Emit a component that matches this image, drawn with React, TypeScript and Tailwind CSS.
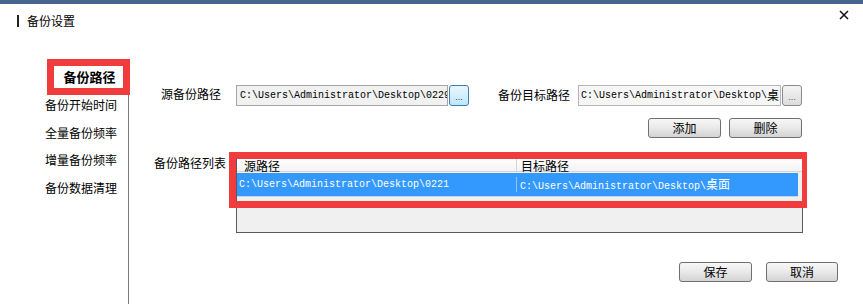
import React from "react";

const cjk = { fontFamily: '"Noto Sans CJK SC", "Liberation Sans", sans-serif' };
const mono = { fontFamily: '"Liberation Mono", "Noto Sans CJK SC", monospace' };

function WinButton({ label, className = "" }: { label: string; className?: string }) {
  return (
    <div
      className={
        "flex items-center justify-center rounded-[3px] border border-[#707070] bg-linear-to-b from-[#f7f7f7] via-[#e9e9e9] to-[#d3d3d3] text-[12px] text-black " +
        className
      }
      style={cjk}
    >
      {label}
    </div>
  );
}

function Dots({ focused }: { focused?: boolean }) {
  return (
    <div
      className={
        "ml-[1px] flex h-[21px] w-[20px] shrink-0 items-end justify-center rounded-[3px] border pb-[3px] text-[9px] leading-none " +
        (focused
          ? "border-[#3c7fb1] bg-linear-to-b from-[#eaf6fd] to-[#bee6fd] text-[#333]"
          : "border-[#8a8a8a] bg-linear-to-b from-[#f4f4f4] to-[#dcdcdc] text-[#555]")
      }
      style={{ fontFamily: '"Liberation Sans", sans-serif' }}
    >
      ...
    </div>
  );
}

export default function App() {
  const sideItems = ["备份开始时间", "全量备份频率", "增量备份频率", "备份数据清理"];
  return (
    <div className="relative flex h-[304px] w-[863px] flex-col overflow-hidden bg-white text-black" style={cjk}>
      <div className="h-[4px] bg-[#4a6491]" />
      {/* Title row */}
      <div className="flex h-[34px] items-center justify-between pl-[17px] pr-[14px]">
        <div className="flex items-center text-[12px]">
          <span className="mr-[8px] h-[12px] w-[2px] bg-[#222]" />
          <span>备份设置</span>
        </div>
        <svg width="10" height="10" viewBox="0 0 10 10" className="-mt-[12px]">
          <path d="M1 1 L9 9 M9 1 L1 9" stroke="#111" strokeWidth="1.5" />
        </svg>
      </div>

      {/* Body */}
      <div className="flex flex-1">
        {/* Sidebar */}
        <div className="flex w-[129px] flex-col pt-[21px]">
          <div className="ml-[47px] flex h-[36px] w-[83px] items-center justify-center border-[7px] border-[#f03c3c] bg-white pl-[2px] text-[13px] font-bold">
            备份路径
          </div>
          <div className="flex flex-1 flex-col gap-[9.6px] border-r border-[#7a7a7a] pl-[45px] pt-[1px]">
            {sideItems.map((t) => (
              <div key={t} className="flex h-[18px] items-center text-[12px]">
                {t}
              </div>
            ))}
          </div>
        </div>

        {/* Content */}
        <div className="flex flex-1 flex-col pt-[46px]">
          {/* Row 1 */}
          <div className="flex h-[22px] items-center">
            <div className="w-[107px] pl-[32px] text-[12px] -mt-[3px]">源备份路径</div>
            <div
              className="flex h-[21px] w-[212px] shrink-0 items-center overflow-hidden whitespace-nowrap border border-[#a5a5a5] bg-[#f1f1f1] pl-[3px] text-[10px]"
              style={mono}
            >
              C:\Users\Administrator\Desktop\0229
            </div>
            <Dots focused />
            <div className="ml-[29px] w-[80px] text-[12px]">备份目标路径</div>
            <div
              className="flex h-[21px] w-[203px] shrink-0 items-center overflow-hidden whitespace-nowrap border border-[#b5b5b5] bg-[#f6f6f6] pl-[2px] text-[10px]"
              style={mono}
            >
              C:\Users\Administrator\Desktop\<span className="text-[12px]" style={cjk}>桌</span>
            </div>
            <Dots />
          </div>

          {/* Row 2 */}
          <div className="mt-[12px] flex h-[20px] justify-end gap-[8px] pr-[61px]">
            <WinButton label="添加" className="h-[20px] w-[73px]" />
            <WinButton label="删除" className="h-[20px] w-[73px]" />
          </div>

          {/* Row 3 */}
          <div className="mt-[20px] flex">
            <div className="w-[107px] pl-[25px] text-[12px] leading-[14px] -mt-[2px]">备份路径列表</div>
            <div className="relative h-[75px] w-[567px] border border-[#5a5a5a] border-t-[#c8c8c8] bg-[#f0f0f0]">
              <div className="flex h-[13px] bg-linear-to-b from-white to-[#f3f3f3] text-[12px] leading-[13px] border-b border-[#d5d5d5]">
                <div className="w-[280px] border-r border-[#d5d5d5] pl-[7px]">源路径</div>
                <div className="pl-[4px]">目标路径</div>
              </div>
              <div className="mt-[1px] flex h-[23px] w-[561px] items-center bg-[#3399ff] text-[10px] text-white" style={mono}>
                <div className="w-[280px] border-r border-[#8cc4fa] pl-[2px]">C:\Users\Administrator\Desktop\0221</div>
                <div className="pl-[3px]">
                  C:\Users\Administrator\Desktop\<span className="text-[12px]" style={cjk}>桌面</span>
                </div>
              </div>
              <div className="h-[1px] w-[561px] bg-[#c8d4e0]" />
              {/* highlight frame */}
              <div className="pointer-events-none absolute left-[-8px] top-[-7px] h-[56px] w-[578px] border-[7px] border-r-[5px] border-[#f03c3c]" />
            </div>
          </div>

          {/* Row 4 */}
          <div className="mt-[29px] flex h-[20px] justify-end gap-[14px] pr-[25px]">
            <WinButton label="保存" className="h-[20px] w-[73px]" />
            <WinButton label="取消" className="h-[20px] w-[72px]" />
          </div>
        </div>
      </div>
    </div>
  );
}
